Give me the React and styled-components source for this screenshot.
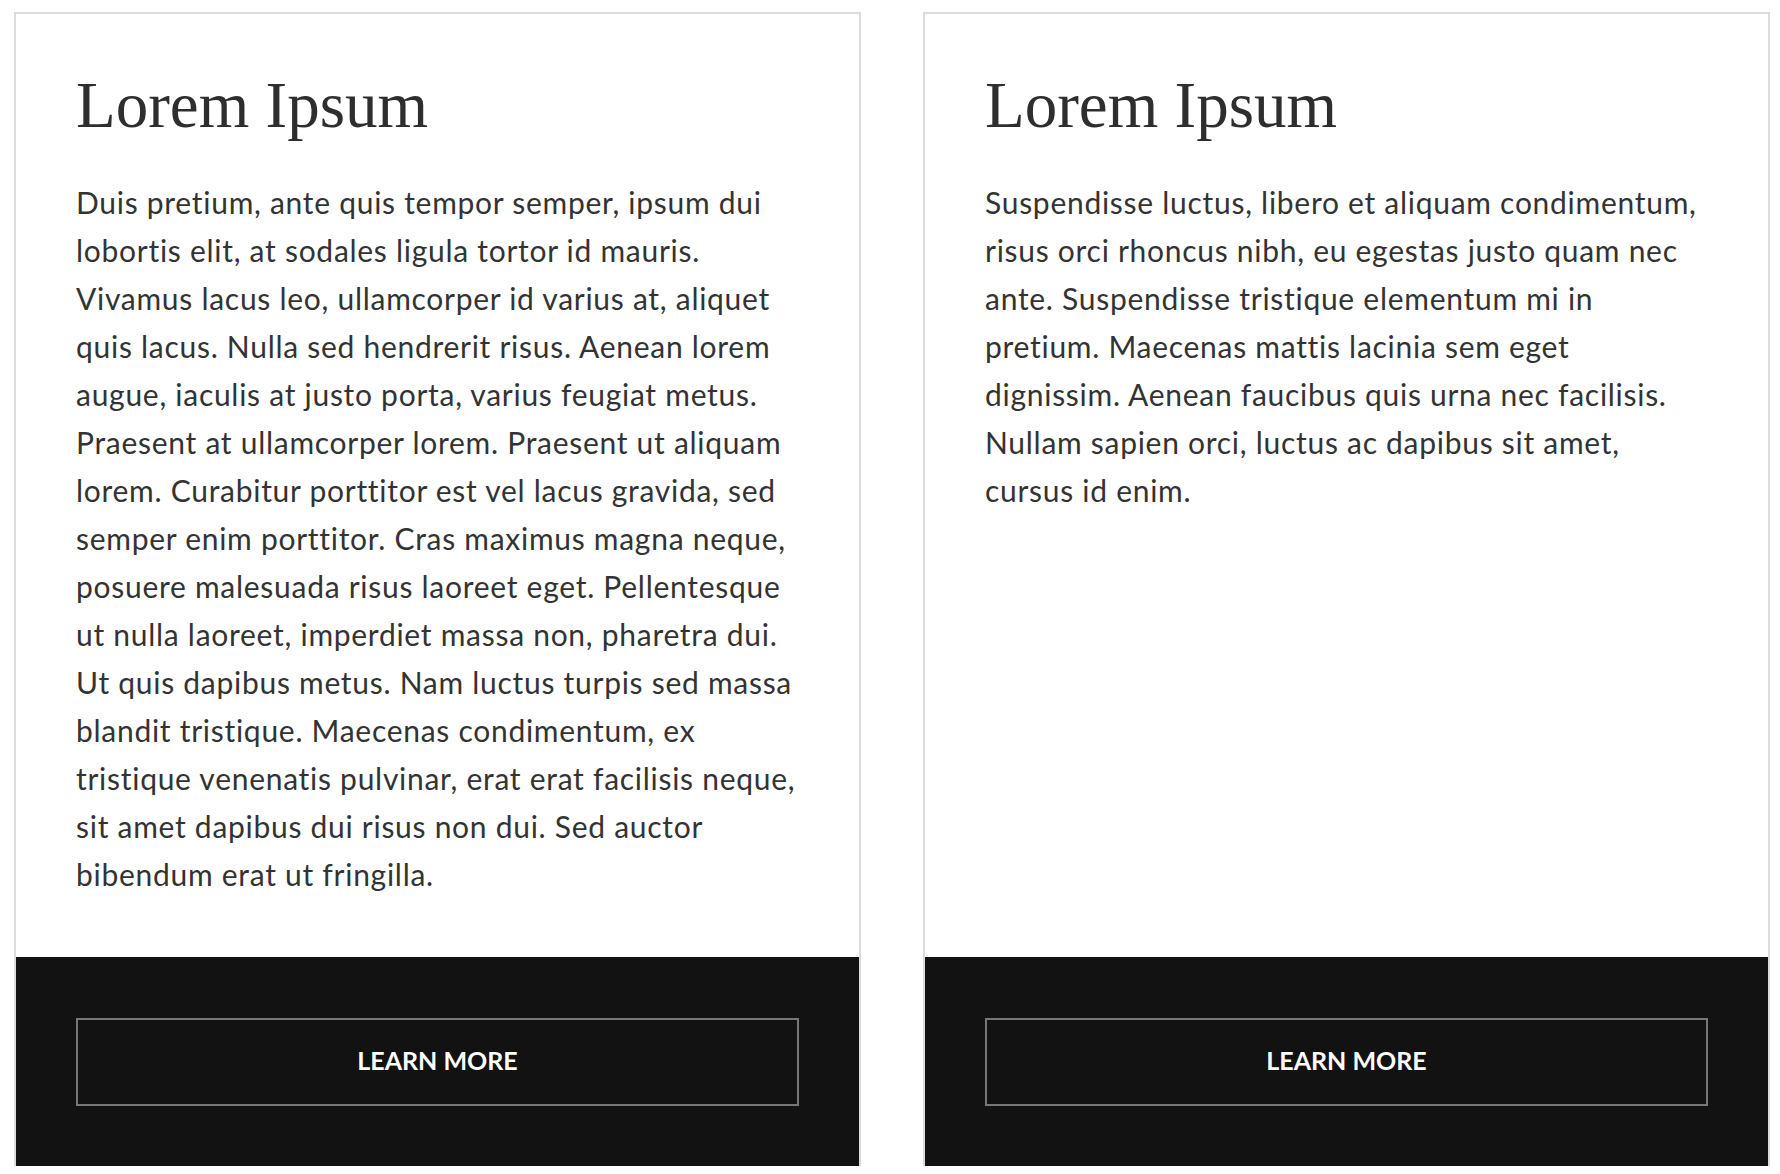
import React from "react";
import styled, { createGlobalStyle } from "styled-components";

const Global = createGlobalStyle`
  html, body { margin: 0; padding: 0; background: #fff; }
  body { font-family: Lato, "Open Sans", sans-serif; }
`;

const Page = styled.div`
  display: grid;
  grid-template-columns: 847px 847px;
  column-gap: 62px;
  padding: 12px 0 8px 14px;
  align-items: stretch;
`;

const Card = styled.article`
  display: flex;
  flex-direction: column;
  border: 2px solid #dcdcdc;
  border-bottom: none;
  background: #fff;
`;

const Body = styled.div`
  flex: 1;
  padding: 60px 60px 59px;
`;

const Title = styled.h2`
  margin: 0 0 42px;
  font-family: "Liberation Serif", "Times New Roman", serif;
  font-weight: 400;
  font-size: 65px;
  line-height: 62px;
  color: #2e2e2e;
`;

const Text = styled.p`
  margin: 0;
  font-family: Lato, "Open Sans", sans-serif;
  font-size: 30px;
  line-height: 48px;
  letter-spacing: 0.72px;
  font-variant-ligatures: none;
  color: #333;
`;

const Footer = styled.div`
  background: #121212;
  padding: 61px 60px 60px;
`;

const Button = styled.a`
  display: flex;
  align-items: center;
  justify-content: center;
  box-sizing: border-box;
  height: 88px;
  padding-bottom: 4px;
  border: 2px solid #777;
  color: #fff;
  font-family: Lato, sans-serif;
  font-weight: 700;
  font-size: 25px;
  text-transform: uppercase;
  text-decoration: none;
  cursor: pointer;
`;

const cards = [
  {
    title: "Lorem Ipsum",
    text:
      "Duis pretium, ante quis tempor semper, ipsum dui lobortis elit, at sodales ligula tortor id mauris. Vivamus lacus leo, ullamcorper id varius at, aliquet quis lacus. Nulla sed hendrerit risus. Aenean lorem augue, iaculis at justo porta, varius feugiat metus. Praesent at ullamcorper lorem. Praesent ut aliquam lorem. Curabitur porttitor est vel lacus gravida, sed semper enim porttitor. Cras maximus magna neque, posuere malesuada risus laoreet eget. Pellentesque ut nulla laoreet, imperdiet massa non, pharetra dui. Ut quis dapibus metus. Nam luctus turpis sed massa blandit tristique. Maecenas condimentum, ex tristique venenatis pulvinar, erat erat facilisis neque, sit amet dapibus dui risus non dui. Sed auctor bibendum erat ut fringilla.",
  },
  {
    title: "Lorem Ipsum",
    text:
      "Suspendisse luctus, libero et aliquam condimentum, risus orci rhoncus nibh, eu egestas justo quam nec ante. Suspendisse tristique elementum mi in pretium. Maecenas mattis lacinia sem eget dignissim. Aenean faucibus quis urna nec facilisis. Nullam sapien orci, luctus ac dapibus sit amet, cursus id enim.",
  },
];

export default function App() {
  return (
    <>
      <Global />
      <Page>
        {cards.map((c, i) => (
          <Card key={i}>
            <Body>
              <Title>{c.title}</Title>
              <Text>{c.text}</Text>
            </Body>
            <Footer>
              <Button>Learn More</Button>
            </Footer>
          </Card>
        ))}
      </Page>
    </>
  );
}
